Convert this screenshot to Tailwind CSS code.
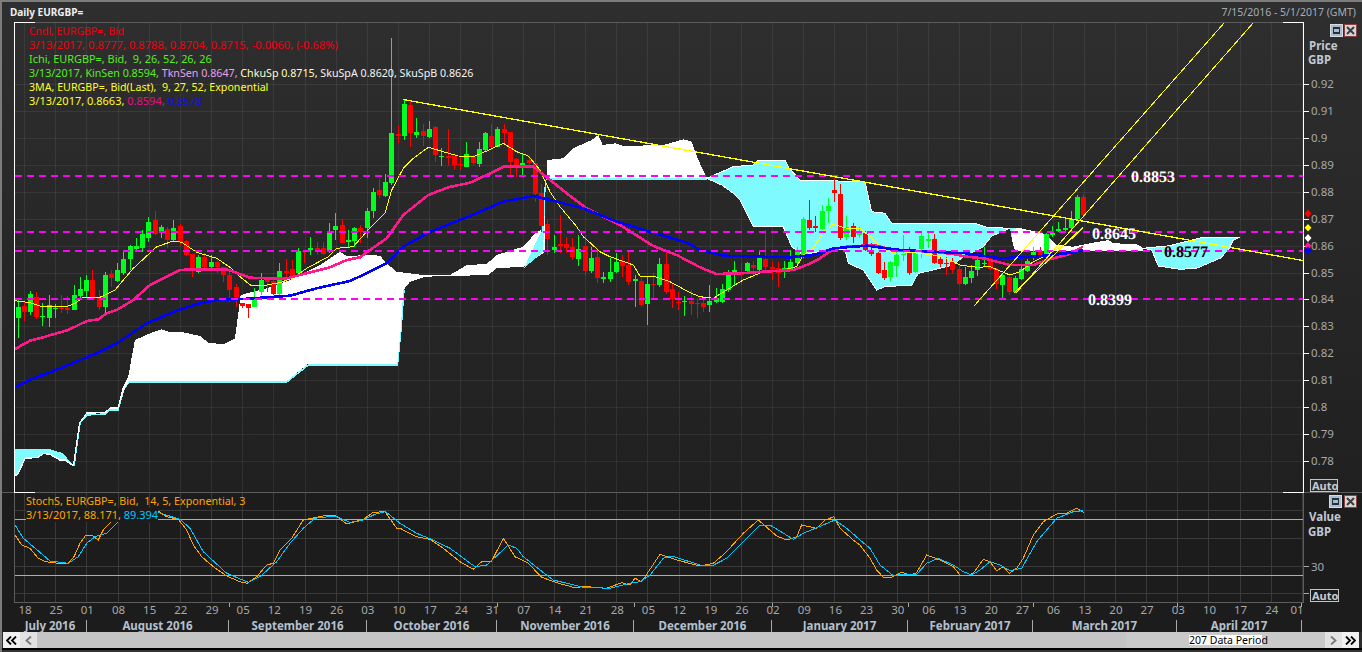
<!DOCTYPE html>
<html><head><meta charset="utf-8"><title>Daily EURGBP=</title>
<script src="https://cdn.jsdelivr.net/npm/@tailwindcss/browser@4"></script>
</head>
<body class="bg-[#2c2c2c] overflow-hidden">
<div class="w-[1362px] h-[652px] flex flex-col border-l-2 border-t-2 border-[#7c7c7c] font-['Noto_Sans',sans-serif] text-[11px] leading-none overflow-hidden">
  <!-- title bar -->
  <div class="h-[20px] shrink-0 flex items-center justify-between pl-2 pr-[6px] bg-[#2e2e2e]">
    <span class="font-bold text-[#f0f0f0] text-[10px]">Daily EURGBP=</span>
    <span class="text-[#a3adb8] text-[10.5px]">7/15/2016 - 5/1/2017 (GMT)</span>
  </div>
  <!-- price panel -->
  <div class="h-[470px] shrink-0 flex bg-gradient-to-b from-[#2e2e2e] to-[#202020]">
    <div class="w-[12px] shrink-0"></div>
    <div class="relative w-[1290px] h-[470px] shrink-0">
      <svg id="main" class="block" width="1290" height="470" viewBox="14 22 1290 470" shape-rendering="crispEdges">
        <g id="mgrid" stroke="#ffffff" stroke-opacity="0.07"></g>
        <g id="clouds">
          <polygon fill="#7ffbff" points="15,449 49.3,449 63.3,453.3 73.3,465.7 65,460 60,460 50,454.3 43.3,453.3 38.3,457.3 25,458.3 18.3,473.3 15,475.7"/>
          <polyline fill="none" stroke="#ffffff" stroke-width="1.5" points="15,475.7 18.3,473.3 25,458.3 38.3,457.3 43.3,453.3 50,454.3 60,460 65,460 73.3,465.7"/>
          <polyline fill="none" stroke="#7ffbff" stroke-width="1.5" points="74,466 80,423 87,415 105,414 110,410 118,410 124,389 129,382 286.7,382 308.3,365 397.5,365 401,330 404,290"/>
          <polygon fill="#ffffff" points="73.3,465.7 79.3,423.3 86.7,412.7 105,412.3 110,407.3 118.3,407.3 123.3,386.7 128.3,376.7 131.7,356.7 135,340 150,333.3 161.7,329.3 170,332 181.7,332 200,336 208.3,342.7 223.3,344.3 235,338.3 238.3,313.3 240.7,295 253.3,291.7 266.7,288.3 290,280 320,265 340,251.7 346.7,256 370,255 380,255.7 386.7,263.3 396.7,271.7 423.3,275 450,275 466.7,265 486.7,264 496.7,255 523.3,246.7 536.7,231.7 541.7,230 545,180 545,252 523.3,266.7 496.7,268.3 488.3,275 425,276.7 410,281.7 403.3,290 400.7,330 397.3,363.7 308.3,363.7 286.7,381 129,381 124,390 118,409 110,409 105,413 86.7,414 80,423"/>
          <polyline fill="none" stroke="#ffffff" stroke-width="1" points="73.5,465 79.5,423 86.7,413 105,412.5 110,408 118,408 123,388"/>
          <polygon fill="#7ffbff" points="541.7,230 545,180 546,180 543,252 524,268"/>
          <polygon fill="#ffffff" points="546.7,160 563.3,158.3 573.3,148.3 591.7,140 598.3,135 602.7,145 615,143.3 623.3,146 663.3,145 683.3,139.3 691.7,141.7 698.3,160 706.7,177.3 706.7,178.3 546.7,178.3"/>
          <rect x="546" y="178" width="161" height="2" fill="#7ffbff"/>
          <polygon fill="#7ffbff" stroke="#ffffff" stroke-width="1" points="706.7,178.3 733.3,166.7 753.3,165 758.3,160 785,160 789.3,168.3 800,180 865,181.7 871.7,211.7 885,213.3 891.7,223.3 976.7,224 986.7,227.3 1010,228.3 991.7,236 983.3,246.7 963.3,256.7 953.3,265 933.3,270 918.3,273.3 911.7,285 885,286.7 876.7,290 863.3,270 848.3,263.3 845,250 833.3,248.3 803.3,255 791.7,246.7 783.3,226.7 753.3,226.7 740,200 733.3,193.3 721.7,185"/>
          <polygon fill="#7ffbff" points="1010,228.3 1012,240 1015,251 1020,251 1020,228"/>
          <polygon fill="#ffffff" points="1012,229 1020,228 1037,232 1040,231.7 1050,238.3 1056.7,245 1073,246.7 1090,243.3 1108.3,240 1113.3,243.3 1136.7,244 1143.3,248.3 1143,251 1015,251 1012,240"/>
          <polygon fill="#7ffbff" stroke="#ffffff" stroke-width="1" points="1143,248.3 1151.7,250 1158.3,266 1180,269.3 1196.7,268.3 1220,258.3 1228.3,250 1233.3,240 1240,237.3 1203.3,237.3 1185,241.7 1170,245.7"/>
        </g>
        <g id="candles"></g>
        <polyline fill="none" stroke="#ffff00" stroke-width="1" points="15,300.7 30,302.7 41.7,306.7 66.7,306.7 75,303.3 83.3,297.3 100,297.3 115,290 133.3,268.3 146.7,256 156.7,246.7 173.3,241 181.7,242.3 196.7,252.3 216.7,258.3 230,267.3 240,276.7 251.7,286 266.7,285 280,282.7 293.3,277.7 306.7,268.3 328.3,256.7 336.7,248.3 353.3,246.7 370,228 385,213.3 391.7,190 403.3,168.3 413.3,158.3 428.3,147.3 435,149.3 458.3,156 473.3,156.7 486.7,151 503.3,143.3 516.7,151.7 528.3,156 540,170 550,191.7 560,206.7 576.7,226.7 583.3,236.7 600,251.7 610,256.7 633.3,265 640,276 653.3,276 670,281.7 690,292.7 700,296.7 713.3,298.3 726.7,290 743.3,280 763.3,271.7 783.3,270 796.7,266.7 803.3,255 813.3,248.3 823.3,231.7 833.3,224.3 846.7,228.3 860,228.3 870,236.7 883.3,250 896.7,253.3 913.3,252.7 933.3,255 946.7,258.3 960,265 976.7,267.3 990,266.7 1010,275 1020,271.7 1033.3,261.7 1046.7,255 1066.7,243.3 1083,228"/>
        <polyline fill="none" stroke="#ff1a8c" stroke-width="2.6" points="15,349 30,340.7 43.3,337.3 56.7,333.3 68.3,330 86.7,321 98.3,319.3 106.7,313.3 116.7,310 133.3,300 150,285 163.3,278.3 180,270 193.3,269.3 226.7,269.3 250,277.7 266.7,278.3 286.7,278.3 300,275 330,267.3 346.7,260 360,257.3 370,250 386.7,238.3 403.3,215 428.3,195 448.3,187.3 470,182.7 486.7,175 503.3,166.7 533.3,166.7 546.7,177.3 566.7,193.3 586.7,208.3 620,225 653.3,246 676.7,255 700,267.3 716.7,274 740,273.3 763.3,271.7 793.3,270 806.7,265 820,258.3 833.3,249.3 846.7,246.7 873.3,245 893.3,250 933.3,251.7 953.3,254 966.7,256.7 983.3,258.3 1010,265 1033.3,265 1046.7,260 1066.7,255 1083,246.7"/>
        <polyline fill="none" stroke="#0000ff" stroke-width="2.6" points="15,387 30,380 60,368.3 96.7,353.3 116.7,343.3 146.7,323.3 176.7,310.7 200,303.3 216.7,300 243.3,299 266.7,297.3 290,295.7 316.7,288.3 350,281 370,271.7 386.7,263.3 403.3,246.7 428.3,232.7 470,216 503.3,201.7 533.3,196 556.7,201.7 583.3,208.3 616.7,221.7 653.3,232.7 686.7,242.7 700,250 723.3,255.7 760,256.7 790,257.3 813.3,255 833.3,248.3 866.7,245.7 900,250 933.3,251.7 966.7,253.3 1000,258.3 1033.3,256.7 1066.7,253.3 1083,250"/>
        <g stroke="#ff00ff" stroke-width="2" stroke-dasharray="7 5" fill="none">
          <path d="M15 176H1303"/><path d="M15 232H1303"/><path d="M15 251H1303"/><path d="M15 299H1303"/>
        </g>
        <g stroke="#ffff00" fill="none" stroke-width="1">
          <path stroke-width="1.3" d="M403 99.5L1303 260.5"/>
          <path d="M974 306L1225 22"/><path d="M1016 293L1254 22"/><path d="M1014 293L1083 227"/>
        </g>
        <path d="M35 22.5H1283" stroke="#5c5c5c" fill="none"/>
        <path d="M35 22.5H14.5V492M1283 22.5H1303.5V492" stroke="#ffffff" fill="none"/>
        <g class="font-['Liberation_Serif',serif] font-bold text-[16px]" shape-rendering="auto" text-rendering="geometricPrecision">
          <text x="1131" y="182" fill="#ffffff">0.8853</text>
          <text x="1092" y="238.5" fill="#ffffff">0.8645</text>
          <text x="1164" y="257" fill="#000000">0.8577</text>
          <text x="1088" y="305" fill="#ffffff">0.8399</text>
        </g>
      </svg>
      <div class="absolute left-[15px] top-[2px] leading-[14px]">
        <div class="whitespace-pre text-[10.4px] text-[#f0000f]">Cndl, EURGBP=, Bid</div>
        <div class="whitespace-pre text-[11.2px] text-[#f0000f]">3/13/2017, 0.8777, 0.8788, 0.8704, 0.8715, -0.0060, (-0.68%)</div>
        <div class="whitespace-pre text-[10.9px] text-[#55ee22]">Ichi, EURGBP=, Bid,  9, 26, 52, 26, 26</div>
        <div class="whitespace-pre text-[10.7px] text-[#55ee22]">3/13/2017, KinSen 0.8594, <span class="text-[#e8a0f0]">TknSen 0.8647,</span> <span class="text-[#ffffc8]">ChkuSp 0.8715,</span> <span class="text-[#f4f4f4]">SkuSpA 0.8620, SkuSpB 0.8626</span></div>
        <div class="whitespace-pre text-[10.66px] text-[#ffff20]">3MA, EURGBP=, Bid(Last),  9, 27, 52, Exponential</div>
        <div class="whitespace-pre text-[11px] text-[#ffff20]">3/13/2017, 0.8663, <span class="text-[#e0108a]">0.8594,</span> <span class="text-[#1010f0]">0.8578</span></div>
      </div>
    </div>
    <svg class="block shrink-0" width="58" height="470" viewBox="1304 22 58 470">
      <g id="paxis" class="text-[11.5px]" fill="#a8a8a8"></g>
      <text x="1309" y="50" class="font-bold text-[11.5px]" fill="#c0c8d4">Price</text>
      <text x="1308" y="64" class="font-bold text-[11.5px]" fill="#c0c8d4">GBP</text>
      <g>
        <rect x="1330.5" y="24.5" width="12" height="12" fill="#a9bccf" stroke="#d4dce4"/><rect x="1333" y="27" width="7" height="7" fill="#26303a"/><rect x="1334" y="29" width="5" height="3" fill="#a9bccf"/>
        <rect x="1344.5" y="24.5" width="12" height="12" fill="#d6d6d6" stroke="#8a4040"/><path d="M1347 27L1354 34M1354 27L1347 34" stroke="#3c3c3c" stroke-width="2"/>
      </g>
      <g fill="#ff0000"><path d="M1308 209.5L1311.5 213.5L1308 217.5L1304.5 213.5Z"/></g>
      <path d="M1308 224L1311.5 227.7L1308 231.5L1304.5 227.7Z" fill="#ffff00"/>
      <path d="M1308 234L1311.5 238L1308 242L1304.5 238Z" fill="#ffffff"/>
      <path d="M1308 242L1311.5 246L1308 250L1304.5 246Z" fill="#ff1a8c"/>
      <path d="M1308 246.5L1311.5 250.5L1308 254.5L1304.5 250.5Z" fill="#0000ff"/>
      <rect x="1310.5" y="479.5" width="27" height="12" fill="#2a2a2a" stroke="#c4c4c4"/>
      <text x="1312" y="489.5" class="font-bold text-[11px]" fill="#c8ccd2">Auto</text>
    </svg>
  </div>
  <!-- divider -->
  <div class="h-px shrink-0 flex bg-[#5c5c5c]"><div class="ml-[12px] w-[21px] bg-white"></div><div class="ml-[1248px] w-[21px] bg-white"></div></div>
  <!-- stochastic panel -->
  <div class="h-[110px] shrink-0 flex bg-[#1c1c1c]">
    <div class="w-[12px] shrink-0"></div>
    <div class="relative w-[1290px] h-[110px] shrink-0">
      <svg class="block" width="1290" height="110" viewBox="14 493 1290 110" shape-rendering="crispEdges">
        <g id="lgrid" stroke="#3a3a3a"></g>
        <path d="M15 519.5H1303M15 575.5H1303" stroke="#ffa500" fill="none"/>
        <g id="stoch" fill="none" stroke-width="1"></g>
        <path d="M14.5 493V602.5H1303.5V493" stroke="#5c5c5c" fill="none"/>
      </svg>
      <div class="absolute left-[12px] top-[1px] leading-[14px] text-[#ffa500]">
        <div class="whitespace-pre text-[10.75px]">StochS, EURGBP=, Bid,  14, 5, Exponential, 3</div>
        <div class="whitespace-pre text-[10.95px] bg-[#1c1c1c] w-[132px]">3/13/2017, 88.171, <span class="text-[#00c8ff]">89.394</span></div>
      </div>
    </div>
    <svg class="block shrink-0" width="58" height="110" viewBox="1304 493 58 110">
      <rect x="1329.5" y="495.5" width="12" height="12" fill="#a9bccf" stroke="#d4dce4"/><rect x="1332" y="498" width="7" height="7" fill="#26303a"/><rect x="1333" y="500" width="5" height="3" fill="#a9bccf"/>
      <rect x="1344.5" y="495.5" width="12" height="12" fill="#d6d6d6" stroke="#8a4040"/><path d="M1347 498L1354 505M1354 498L1347 505" stroke="#3c3c3c" stroke-width="2"/>
      <text x="1309" y="521" class="font-bold text-[11.5px]" fill="#c0c8d4">Value</text>
      <text x="1308" y="536" class="font-bold text-[11.5px]" fill="#c0c8d4">GBP</text>
      <path d="M1304 566.5H1309M1304 593.5H1309" stroke="#a8a8a8"/>
      <text x="1311" y="571" class="text-[11.5px]" fill="#a8a8a8">30</text>
      <rect x="1310.5" y="589.5" width="28" height="12" fill="#1c1c1c" stroke="#c4c4c4"/>
      <text x="1312" y="599.5" class="font-bold text-[11px]" fill="#c8ccd2">Auto</text>
    </svg>
  </div>
  <!-- date axis -->
  <div class="h-[17px] shrink-0 bg-[#1c1c1c]">
    <svg class="block" width="1360" height="17" viewBox="2 603 1360 17"><g id="dates" class="text-[11.5px]" fill="#a8a8a8"></g><path d="M229.5 603V607M497.5 603V607M634.5 603V607M772.5 603V607M908.5 603V607M1033.5 603V607M1177.5 603V607M1301.5 603V607" stroke="#a8a8a8"/></svg>
  </div>
  <!-- months -->
  <div class="h-[12px] shrink-0 flex pl-[12px] bg-[#1c1c1c] font-bold text-[11.5px] text-[#b4c0ce] leading-[12px] text-center">
    <div class="w-[73px] border-r border-[#a8a8a8]">July 2016</div>
    <div class="w-[142px] border-r border-[#a8a8a8]">August 2016</div>
    <div class="w-[138px] border-r border-[#a8a8a8]">September 2016</div>
    <div class="w-[130px] border-r border-[#a8a8a8]">October 2016</div>
    <div class="w-[137px] border-r border-[#a8a8a8]">November 2016</div>
    <div class="w-[138px] border-r border-[#a8a8a8]">December 2016</div>
    <div class="w-[136px] border-r border-[#a8a8a8]">January 2017</div>
    <div class="w-[125px] border-r border-[#a8a8a8]">February 2017</div>
    <div class="w-[144px] border-r border-[#a8a8a8]">March 2017</div>
    <div class="w-[125px] border-r border-[#a8a8a8]">April 2017</div>
  </div>
  <!-- scrollbar -->
  <div class="h-[16px] shrink-0 flex ml-px w-[1356px] bg-[#c4c4c4]">
    <div class="w-[17px] flex items-center justify-center bg-[#f0f0f0]"><svg width="11" height="9" viewBox="0 0 11 9" fill="none" stroke="#000" stroke-width="1.8"><path d="M5 .5L1 4.5L5 8.5M10 .5L6 4.5L10 8.5"/></svg></div>
    <div class="w-[17px] flex items-center justify-center bg-[#e2e2e2]"><svg width="7" height="9" viewBox="0 0 7 9" fill="none" stroke="#777" stroke-width="1.8"><path d="M6 .5L1.5 4.5L6 8.5"/></svg></div>
    <div class="w-[1089px]"></div>
    <div class="w-[199px] bg-[#c9c9c9] flex items-center justify-center">
      <span class="bg-white text-black h-[10px] leading-[10px] text-[10.5px] w-[73px] text-center whitespace-nowrap">207 Data Period</span>
    </div>
    <div class="w-[17px] flex items-center justify-center bg-[#e2e2e2]"><svg width="7" height="9" viewBox="0 0 7 9" fill="none" stroke="#777" stroke-width="1.8"><path d="M1 .5L5.5 4.5L1 8.5"/></svg></div>
    <div class="w-[17px] flex items-center justify-center bg-[#f0f0f0]"><svg width="11" height="9" viewBox="0 0 11 9" fill="none" stroke="#000" stroke-width="1.8"><path d="M1 .5L5 4.5L1 8.5M6 .5L10 4.5L6 8.5"/></svg></div>
  </div>
  <div class="h-[2px] shrink-0 bg-black"></div>
  <div class="flex-1 bg-[#333333]"></div>
</div>
<script>
const NS='http://www.w3.org/2000/svg';
const el=(p,t,a,txt)=>{const e=document.createElementNS(NS,t);for(const k in a)e.setAttribute(k,a[k]);if(txt)e.textContent=txt;document.getElementById(p).appendChild(e);return e;};
const D="g307,318,300,338 r306,312,302,321 g294,312,291,315 r297,317,292,319 g316,317,303,326 g305,318,295,327 g308,309,304,318 r308,309,295,313 r308,310,296,314 g295,310,285,310 g289,296,277,298 g280,291,275,297 r280,299,270,300 r297,307,290,310 g275,307,272,314 r274,278,270,287 g270,281,263,282 g259,273,250,275 g246,259,245,270 g246,249,238,252 g234,248,230,252 g222,238,217,242 r220,234,211,235 g227,233,225,238 r229,240,227,248 g228,240,220,242 r226,242,224,245 r241,255,240,256 r254,270,254,277 g257,272,255,273 r257,267,253,270 g262,267,255,270 r262,267,258,273 r267,275,267,282 r275,290,272,302 r287,297,284,307 r303,306,303,308 r304,308,304,318 g297,307,288,307 g280,292,273,295 r279,282,277,292 r281,294,277,295 g271,294,263,295 r271,273,259,280 r269,276,260,278 g251,273,248,277 r251,252,250,263 g248,250,237,255 r248,250,242,255 r248,254,242,255 g233,252,223,253 g226,230,213,240 r225,243,219,243 g240,242,230,247 g228,241,227,247 r228,232,225,243 g211,228,208,238 g192,211,188,218 r190,195,179,198 g182,196,174,197 g133,183,38,185 r134,136,126,143 g104,136,99,140 r105,133,101,147 g132,135,118,138 r131,136,124,146 g129,137,121,138 r127,155,126,162 g156,157,148,166 r156,158,129,166 r156,165,156,170 r164,165,158,170 g154,167,142,167 r157,163,155,165 g149,164,142,167 g133,150,132,151 r136,147,124,150 g129,147,127,147 r129,133,124,145 r132,162,132,177 r159,166,158,177 g163,166,153,175 r160,163,155,167 r163,194,129,202 r193,226,184,232 r224,239,220,255 g247,250,235,253 r244,246,215,253 r244,248,237,253 r247,257,238,260 g249,259,235,266 r246,271,235,276 g258,271,247,273 r257,278,252,283 g277,279,272,283 g272,279,258,282 g262,272,253,273 r261,266,255,277 r265,282,251,285 g279,281,275,307 r281,305,278,307 g284,304,277,325 r284,285,273,298 g264,285,258,287 r264,292,252,294 r289,299,283,308 r302,303,292,310 g301,302,296,316 r301,304,290,315 r303,304,298,318 r303,307,300,312 g301,305,285,312 g298,302,288,303 g289,302,284,303 g274,290,270,292 g270,273,261,285 r273,275,263,285 g263,271,262,273 r265,268,261,277 g258,270,250,272 r259,267,230,272 r267,269,262,280 r268,273,262,287 g268,270,261,278 g262,269,250,270 g252,263,247,265 g219,256,217,258 r220,228,200,230 r226,228,216,232 g211,229,205,230 g206,211,198,223 r190,193,177,202 r194,238,184,240 g227,237,216,240 r226,237,223,243 g233,235,227,238 r233,250,231,251 r250,254,243,256 r253,273,252,274 r270,278,262,280 g262,277,261,281 g255,266,252,277 g253,255,235,261 r250,273,247,275 g253,272,250,273 g236,249,233,258 g239,241,233,248 r239,263,234,264 r259,264,257,267 r263,264,257,275 r262,270,258,274 r269,284,264,285 g277,284,267,285 g271,278,265,283 g260,270,258,276 g263,264,247,267 r259,269,258,270 r269,284,268,289 g275,285,273,298 r277,292,274,295 g278,292,276,293 g269,279,265,280 g261,271,259,272 g252,258,247,260 r251,256,247,257 g234,256,233,257 g233,235,226,237 g229,231,222,232 g228,230,218,231 g219,228,211,229 g197,219,195,220 r197,215,194,218".split(' ');
D.forEach((s,i)=>{const c=s[0]==='g'?'#00ff1e':'#ff0000';const [t,b,h,l]=s.slice(1).split(',').map(Number);const x=Math.round(17.5+6.233*i);
  el('candles','rect',{x:x,y:h,width:1,height:l-h,fill:c});el('candles','rect',{x:x-2,y:t,width:5,height:Math.max(b-t,1),fill:c});});
for(let k=0;k<=41;k++){const x=Math.round(24+31.17*k)+.5;el('mgrid','path',{d:`M${x} 23V491`});el('lgrid','path',{d:`M${x} 493V602`});}
['0.92','0.91','0.9','0.89','0.88','0.87','0.86','0.85','0.84','0.83','0.82','0.81','0.8','0.79','0.78'].forEach((t,i)=>{const y=Math.round(84+26.93*i);
  el('mgrid','path',{d:`M15 ${y+.5}H1303`});el('paxis','path',{d:`M1304 ${y+.5}H1309`,stroke:'#ffffff'});el('paxis','text',{x:1311,y:y+3.5},t);});
[510,538,566,593].forEach(y=>el('lgrid','path',{d:`M15 ${y+.5}H1303`}));
'18 25 01 08 15 22 29 05 12 19 26 03 10 17 24 31 07 14 21 28 05 12 19 26 02 09 16 23 30 06 13 20 27 06 13 20 27 03 10 17 24 01'.split(' ').forEach((t,k)=>{
  const x=k===41?1297:25+31.17*k;el('dates','text',{x:x,y:614,'text-anchor':'middle'},t);});
const Z=(ox,oy,s)=>s.trim().split(/\s+/).map(p=>{const [x,y]=p.split(',').map(Number);return (ox+x/3).toFixed(1)+','+(oy+y/3).toFixed(1)}).join(' ');
const line=(c,p)=>el('stoch','polyline',{stroke:c,points:p});
line('#ffa500',Z(0,480,"45,165 65,195 90,205 115,235 135,245 175,250 205,250 222,230 240,190 258,165 275,165 295,180 310,150 332,127"));
line('#ffa500',Z(0,480,"473,92 500,110 535,118 560,150 580,195 605,230 640,260 680,288 720,305 742,310 770,290 800,255 820,250 840,210 875,175 910,120 945,113 985,105 1005,105 1040,132 1090,118 1120,97 1155,95 1190,145")+' '+Z(400,500,"0,85 50,110 90,118 130,145 180,185 220,208 245,185 275,183 310,115 345,170 385,190 425,232 470,248 520,262 560,260 620,265 665,248 690,255 705,235 725,245 780,163 830,180 900,198 940,190 975,160 1030,100 1075,60 1130,108 1160,120 1190,110 1205,75 1250,85 1275,60 1302,50 1320,85 1360,120")+' '+Z(860,500,"0,135 30,175 50,210 70,232 95,232 125,217 150,225 170,218 200,165 240,180 280,200 300,225 320,228 340,220 370,178 390,185 410,212 430,200 448,220 470,205 490,175 520,105 550,65 590,42 620,40 650,25 672,38"));
line('#00c8ff',Z(0,480,"45,135 70,175 100,200 150,243 205,250 235,230 260,190 285,170 320,160 355,125"));
line('#00c8ff',Z(0,480,"473,97 540,118 570,145 610,215 680,280 745,307 780,290 830,245 870,190 910,145 945,115 1005,108 1050,127 1085,122 1125,103 1157,95")+' '+Z(400,500,"0,70 50,100 100,120 150,145 225,200 260,195 325,135 350,145 370,170 420,210 460,240 550,262 630,265 690,250 720,245 750,225 790,175 815,168 900,195 935,198 980,175 1080,75 1110,75 1180,118 1210,100 1305,60 1340,85")+' '+Z(860,500,"0,120 30,145 60,195 100,227 130,223 170,223 200,190 235,175 280,195 310,215 335,225 360,210 390,185 420,195 450,212 485,205 530,125 590,55 640,35 670,32"));
</script>
</body></html>
